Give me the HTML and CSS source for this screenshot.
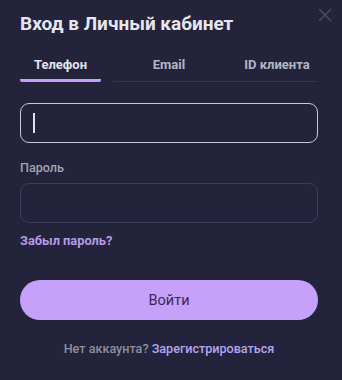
FILE: index.html
```html
<!DOCTYPE html>
<html lang="ru">
<head>
<meta charset="utf-8">
<link rel="stylesheet" href="styles.css">
</head>
<body>
<div class="modal">
  <button class="close" aria-label="Закрыть">
    <svg width="14" height="14" viewBox="0 0 14 14"><path d="M1 1L13 13M13 1L1 13" stroke="#4a4c68" stroke-width="1.4" fill="none"/></svg>
  </button>
  <h1 class="title">Вход в Личный кабинет</h1>
  <div class="tabs">
    <div class="tab active">Телефон</div>
    <div class="tab">Email</div>
    <div class="tab">ID клиента</div>
  </div>
  <div class="field focused"><span class="caret"></span></div>
  <label class="label">Пароль</label>
  <div class="field"></div>
  <a class="forgot">Забыл пароль?</a>
  <button class="submit">Войти</button>
  <p class="footer">Нет аккаунта? <a class="link">Зарегистрироваться</a></p>
</div>
</body>
</html>
```
FILE: styles.css
```css
html, body {
  margin: 0;
  padding: 0;
  background: #23243b;
}
body {
  font-family: Roboto, "Noto Sans", sans-serif;
  width: 342px;
  height: 380px;
  overflow: hidden;
}
.modal {
  position: relative;
  display: flex;
  flex-direction: column;
  padding: 12px 24px 0 20px;
}
.close {
  position: absolute;
  top: 8px;
  right: 10px;
  width: 14px;
  height: 14px;
  padding: 0;
  border: 0;
  background: none;
  display: flex;
}
.title {
  margin: 0;
  font-size: 19px;
  font-weight: 700;
  color: #e6e6ee;
  line-height: 24px;
}
.tabs {
  position: relative;
  display: flex;
  justify-content: space-between;
  margin-top: 21px;
}
.tabs::after {
  content: "";
  position: absolute;
  left: 93px;
  right: 0;
  bottom: 0;
  height: 1px;
  background: #34364f;
}
.tab {
  width: 81px;
  text-align: center;
  font-size: 13px;
  font-weight: 700;
  color: #b5b6c4;
  line-height: 16px;
  padding-bottom: 6px;
  border-bottom: 3px solid transparent;
}
.tab:nth-child(2) {
  margin-left: 4px;
}
.tab:last-child {
  width: 88px;
  margin-right: -3px;
}
.tab.active {
  color: #e2e2ea;
  border-bottom-color: #c49ff6;
  border-radius: 0 0 2px 2px;
}
.field {
  height: 38px;
  border: 1px solid #3c3e5a;
  border-radius: 9px;
  display: flex;
  align-items: center;
  padding-left: 12px;
}
.field.focused {
  margin-top: 21px;
  border-color: #c9c9d8;
}
.caret {
  width: 1.5px;
  height: 20px;
  background: #e0e0ea;
}
.label {
  margin-top: 17px;
  margin-bottom: 7px;
  font-size: 12.6px;
  font-weight: 500;
  color: #a2a3b2;
  line-height: 16px;
}
.forgot {
  margin-top: 10px;
  font-size: 12.8px;
  font-weight: 700;
  color: #b59be6;
  line-height: 16px;
}
.submit {
  margin-top: 31px;
  height: 40px;
  border: 0;
  border-radius: 20px;
  background: #c7a0fa;
  color: #3a2a58;
  font-family: Roboto, "Noto Sans", sans-serif;
  font-size: 14.5px;
  font-weight: 400;
  padding: 0;
}
.footer {
  margin: 21px 0 0;
  text-align: center;
  font-size: 12.6px;
  font-weight: 500;
  color: #8e8fa0;
  line-height: 16px;
}
.link {
  color: #b7a4ee;
}
```
